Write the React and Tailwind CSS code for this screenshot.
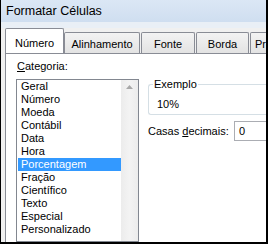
import React from "react";

const items = [
  "Geral",
  "Número",
  "Moeda",
  "Contábil",
  "Data",
  "Hora",
  "Porcentagem",
  "Fração",
  "Científico",
  "Texto",
  "Especial",
  "Personalizado",
];

const tabOff =
  "shrink-0 h-[21px] bg-gradient-to-b from-[#f3f3f3] to-[#e3e3e3] border border-b-0 border-[#898c95] rounded-t-[2px] flex items-start justify-center pt-[6px]";

export default function App() {
  return (
    <div
      className="w-[268px] h-[244px] overflow-hidden flex flex-col bg-[#f0f0f0] border-l border-r-2 border-b-2 border-black text-black"
      style={{ fontFamily: '"Liberation Sans", Arial, sans-serif' }}
    >
      {/* Title bar */}
      <div className="h-[22px] shrink-0 flex items-center pl-[5px] bg-gradient-to-b from-[#dbe7f5] to-[#cfdef0] text-[12.5px] leading-none">
        Formatar Células
      </div>
      <div className="h-[6px] shrink-0 bg-[#e9eff6]" />

      {/* Body */}
      <div className="flex-1 flex flex-col pl-[4px] min-h-0">
        {/* Tabs */}
        <div className="h-[25px] shrink-0 flex items-end text-[11px] leading-none whitespace-nowrap overflow-hidden">
          <div className="relative z-10 -mb-px shrink-0 w-[59px] h-[26px] bg-white border border-b-0 border-[#898c95] rounded-t-[2px] flex items-start justify-center pt-[9px]">
            Número
          </div>
          <div className={`w-[76px] ${tabOff}`}>Alinhamento</div>
          <div className={`ml-px w-[54px] ${tabOff}`}>Fonte</div>
          <div className={`ml-px w-[53px] ${tabOff}`}>Borda</div>
          <div className="ml-px shrink-0 w-[60px] h-[21px] bg-gradient-to-b from-[#f3f3f3] to-[#e3e3e3] border border-b-0 border-[#898c95] rounded-t-[2px] flex items-start pl-[4px] pt-[6px]">
            Proteção
          </div>
        </div>

        {/* Panel */}
        <div className="flex-1 min-h-0 bg-white border-l border-t border-[#898c95] flex pt-[6px] pl-[10px] text-[11px] leading-[13px] overflow-hidden">
          {/* Left column */}
          <div className="flex flex-col w-[123px] shrink-0">
            <div className="pl-px">
              <span className="underline underline-offset-[1px]">C</span>ategoria:
            </div>
            <div className="mt-[6px] flex-1 border border-[#828790] flex min-h-0 overflow-hidden">
              <div className="flex-1 flex flex-col">
                {items.map((it) => (
                  <div
                    key={it}
                    className={
                      it === "Porcentagem"
                        ? "h-[13px] pl-[3px] bg-[#3399ff] text-white ml-px"
                        : "h-[13px] pl-[4px]"
                    }
                  >
                    {it}
                  </div>
                ))}
              </div>
              <div className="w-[17px] shrink-0 bg-gradient-to-r from-[#ececec] via-[#f3f3f3] to-[#ececec] flex justify-center pt-[5px]">
                <svg width="7" height="4" viewBox="0 0 7 4">
                  <path d="M0 4 L3.5 0 L7 4 Z" fill="#a8a8a8" />
                </svg>
              </div>
            </div>
          </div>

          {/* Right column */}
          <div className="flex flex-col ml-[9px] flex-1 min-w-0">
            <div className="relative mt-[24px] h-[31px] border border-[#d5dfe5] rounded-[3px] border-r-0 rounded-r-none -mr-[10px]">
              <span className="absolute left-[4px] -top-[7px] bg-white px-px">
                Exemplo
              </span>
              <div className="pl-[8px] pt-[13px]">10%</div>
            </div>
            <div className="mt-[6px] flex items-center">
              <span className="w-[86px] shrink-0">
                Casas <span className="underline underline-offset-[1px]">d</span>ecimais:
              </span>
              <div className="h-[20px] flex-1 border border-[#abadb3] border-r-0 flex items-center pl-[4px] -mr-[10px]">
                0
              </div>
            </div>
          </div>
        </div>
      </div>
    </div>
  );
}
